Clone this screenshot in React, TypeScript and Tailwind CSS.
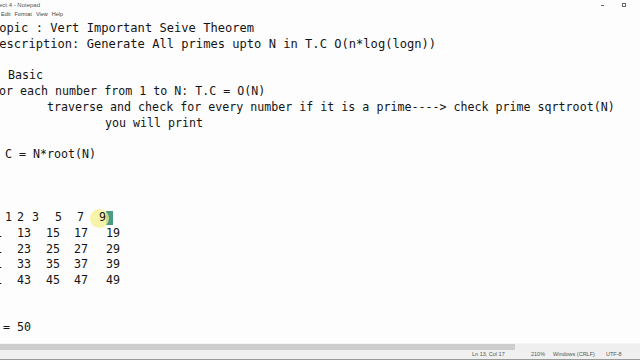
import React from "react";

const mono = { fontFamily: '"DejaVu Sans Mono", "Liberation Mono", monospace' };

function Line({ children }: { children?: React.ReactNode }) {
  return <div className="h-[15.75px] leading-[15.75px] whitespace-pre flex">{children}</div>;
}

export default function App() {
  return (
    <div className="w-[640px] h-[360px] flex flex-col overflow-hidden bg-[#fdfdfd]">
      {/* title bar */}
      <div className="h-[10px] flex items-center justify-between text-[6px] leading-none text-[#555] [font-family:'Liberation_Sans',sans-serif]">
        <span className="ml-[-1px]">ect 4 - Notepad</span>
        <div className="flex items-center">
          <span className="w-[3px] h-[1px] bg-[#666] mr-[18px]"></span>
          <span className="w-[4px] h-[4px] border border-[#666] mr-[14px]"></span>
        </div>
      </div>
      {/* menu bar */}
      <div className="h-[10px] flex items-center gap-[4px] text-[5.5px] leading-none text-[#444] pl-[1px] [font-family:'Liberation_Sans',sans-serif]">
        <span>Edit</span>
        <span>Format</span>
        <span>View</span>
        <span>Help</span>
      </div>
      {/* editor */}
      <div className="flex-1 overflow-hidden pt-[1px] text-[11.65px] text-[#141414] relative" style={mono}>
        <Line><span className="ml-[-8px] text-[12.1px]">Topic : Vert Important Seive Theorem</span></Line>
        <Line><span className="ml-[-8px] text-[12.1px]">Description: Generate All primes upto N in T.C O(n*log(logn))</span></Line>
        <Line />
        <Line><span className="ml-[8px]">Basic</span></Line>
        <Line><span className="ml-[-8px]">For each number from 1 to N: T.C = O(N)</span></Line>
        <Line><span className="ml-[47px]">traverse and check for every number if it is a prime----&gt; check prime sqrtroot(N)</span></Line>
        <Line><span className="ml-[105px]">you will print</span></Line>
        <Line />
        <Line><span className="ml-[5px]">C = N*root(N)</span></Line>
        <Line />
        <Line />
        <Line />
        <Line>
          <span className="ml-[5px] w-[12px]">1</span>
          <span className="w-[15px]">2</span>
          <span className="w-[23px]">3</span>
          <span className="w-[22px]">5</span>
          <span className="w-[22px]">7</span>
          <span className="relative">
            <span className="absolute left-[-9px] top-[-1.5px] w-[19px] h-[19px] rounded-full bg-[#f4ef8c]/75"></span>
            <span className="relative">9</span>
          </span>
          <span className="w-[7px] h-[14px] mt-[1px] bg-[#4a9a86]"></span>
        </Line>
        {[
          ["11", "13", "15", "17", "19"],
          ["21", "23", "25", "27", "29"],
          ["31", "33", "35", "37", "39"],
          ["41", "43", "45", "47", "49"],
        ].map((r, i) => (
          <Line key={i}>
            <span className="ml-[-12px] w-[29px]">{r[0]}</span>
            <span className="w-[29px]">{r[1]}</span>
            <span className="w-[28px]">{r[2]}</span>
            <span className="w-[32px]">{r[3]}</span>
            <span>{r[4]}</span>
          </Line>
        ))}
        <Line />
        <Line />
        <Line><span className="ml-[-11px]">N = 50</span></Line>
      </div>
      {/* horizontal scrollbar */}
      <div className="h-[7px] flex bg-[#efefef] border-t border-[#f6f6f6]">
        <div className="w-[515px] bg-[#cdcdcd]"></div>
      </div>
      {/* status bar */}
      <div className="h-[9px] flex items-center bg-[#f0f0f0] text-[5.5px] leading-none text-[#555] [font-family:'Liberation_Sans',sans-serif]">
        <span className="ml-[472px] w-[59px]">Ln 13, Col 17</span>
        <span className="w-[22px]">210%</span>
        <span className="w-[53px]">Windows (CRLF)</span>
        <span>UTF-8</span>
      </div>
      <div className="h-[1px] bg-[#9a9a9a]"></div>
    </div>
  );
}
